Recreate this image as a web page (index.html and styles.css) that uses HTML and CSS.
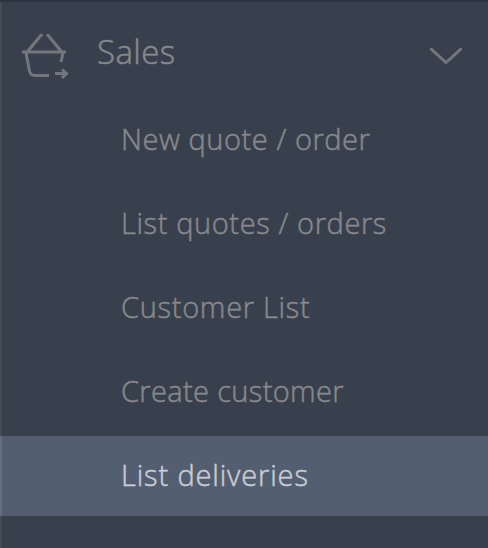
FILE: index.html
```html
<!DOCTYPE html>
<html lang="en">
<head>
  <meta charset="UTF-8" />
  <meta name="viewport" content="width=device-width, initial-scale=1.0"/>
  <title>Sales</title>
  <link rel="stylesheet" href="styles.css">
</head>
<body>
  <nav class="sidebar">
    <div class="menu-header">
      <svg class="menu-icon" width="48" height="48" viewBox="0 0 48 48">
        <path d="M20 0 L6 17 M25 0 L39 17 M0 18 H44 M4 19 L7.5 37 Q8.5 41.5 13 41.5 H27 M41 19 L39 28" />
        <path d="M33 39.5 H44 M40 35.5 L44.5 39.5 L40 44" />
      </svg>
      <span class="menu-title">Sales</span>
      <svg class="menu-arrow" width="32" height="16" viewBox="0 0 32 16">
        <path d="M0 0 L16 14.5 L32 0" />
      </svg>
    </div>
    <ul class="submenu">
      <li><a class="new-order" href="#">New quote / order</a></li>
      <li><a class="list-orders" href="#">List quotes / orders</a></li>
      <li><a class="customer-list" href="#">Customer List</a></li>
      <li><a class="create-customer" href="#">Create customer</a></li>
      <li class="active"><a class="deliveries" href="#">List deliveries</a></li>
    </ul>
  </nav>
</body>
</html>
```

FILE: styles.css
```css
* {
  box-sizing: border-box;
}

body {
  margin: 0;
  background-color: #39404d;
  font-family: "Open Sans", "Noto Sans", sans-serif;
  font-weight: 300;
  -webkit-text-stroke: 0.5px;
  color: #86888d;
}

.sidebar {
  height: 548px;
  border-top: 2px solid #2c3340;
  background: linear-gradient(to right, #474b54 2px, #39404d 2px);
}

.menu-header {
  display: flex;
  align-items: flex-start;
  height: 98px;
  padding: 32px 26px 0 22px;
}

.menu-icon,
.menu-arrow {
  fill: none;
  stroke: #73767c;
  stroke-width: 3;
}

.menu-title {
  margin: -2px 0 0 27px;
  font-size: 33px;
  line-height: 40px;
  letter-spacing: 0.4px;
}

.menu-arrow {
  margin: 14px 0 0 auto;
}

.submenu {
  margin: 0;
  padding: 0;
  list-style: none;
}

.submenu li {
  height: 80px;
  margin-bottom: 4px;
  padding-left: 121px;
}

.submenu a {
  display: block;
  font-size: 29px;
  line-height: 78px;
  color: inherit;
  text-decoration: none;
  white-space: nowrap;
}

/* tracking per label */
.new-order {
  letter-spacing: 0.55px;
}

.list-orders {
  letter-spacing: 0.6px;
}

.customer-list {
  letter-spacing: 0.7px;
}

.create-customer {
  letter-spacing: 0.35px;
}

.deliveries {
  letter-spacing: 0.85px;
}

.submenu .active {
  background: linear-gradient(to right, #676f7e 2px, #545e71 2px);
  color: #c8ccd4;
}
```
